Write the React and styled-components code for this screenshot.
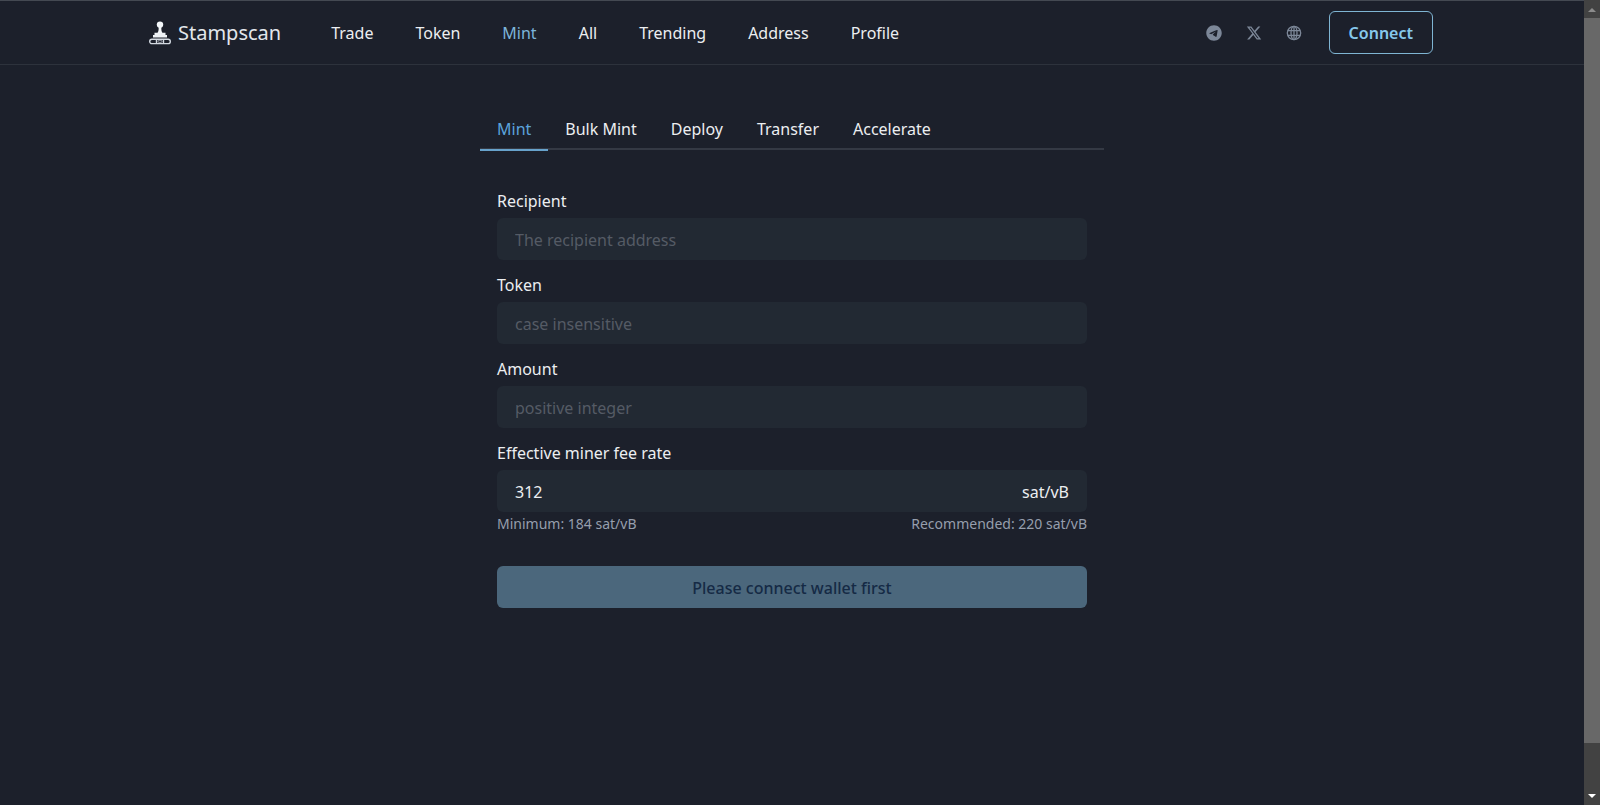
import { useState } from "react";
import styled, { createGlobalStyle } from "styled-components";
import { FaTelegram, FaXTwitter } from "react-icons/fa6";

const navLinks = ["Trade", "Token", "Mint", "All", "Trending", "Address", "Profile"];
const tabs = ["Mint", "Bulk Mint", "Deploy", "Transfer", "Accelerate"];

const StampLogo = () => (
    <svg width="22" height="24" viewBox="0 0 22 24" fill="none">
        <circle cx="11" cy="3.6" r="3.2" fill="#f4f7fa" />
        <path d="M9.5 6h3c-.4 2.400-.1 4.400 1.100 6.200H8.400c1.200-1.800 1.500-3.800 1.100-6.200z" fill="#f4f7fa" />
        <path d="M5.500 11.800h11v2.200H18v2.500H4V14h1.500z" fill="#eef2f6" />
        <rect x="0.700" y="18.200" width="20.600" height="4.400" rx="2.200" stroke="#d3d9e1" strokeWidth="1.400" />
        <path d="M7.500 18.200v4.400M14.500 18.200v4.400" stroke="#d3d9e1" strokeWidth="1.400" />
        <rect x="9" y="19.400" width="4" height="2" rx="1" stroke="#d3d9e1" strokeWidth="0.600" />
    </svg>
);

const GlobeIcon = () => (
    <svg width="16" height="16" viewBox="0 0 16 16" fill="none" stroke="currentColor" strokeWidth="1.300">
        <circle cx="8" cy="8" r="6.700" />
        <ellipse cx="8" cy="8" rx="3" ry="6.700" />
        <path d="M8 1.300v13.400M1.800 5.600h12.400M1.800 10.400h12.400" />
    </svg>
);

const App = () => {
    const [tab, setTab] = useState("Mint");
    const [fee, setFee] = useState("312");

    return (
        <>
            <GlobalStyle />
            <Window>
                <Page>
                    <Header>
                        <HeaderInner>
                            <Brand href='#'>
                                <StampLogo />
                                <span>Stampscan</span>
                            </Brand>
                            <Nav>
                                {navLinks.map((name) => (
                                    <NavLink key={name} href='#' $active={name === "Mint"}>
                                        {name}
                                    </NavLink>
                                ))}
                            </Nav>
                            <Socials>
                                <a href='#' aria-label='Telegram'><FaTelegram size={16} /></a>
                                <a href='#' aria-label='X'><FaXTwitter size={16} /></a>
                                <a href='#' aria-label='Website'><GlobeIcon /></a>
                            </Socials>
                            <ConnectButton type='button'>Connect</ConnectButton>
                        </HeaderInner>
                    </Header>
                    <Main>
                        <TabList role='tablist'>
                            {tabs.map((name) => (
                                <Tab
                                    key={name}
                                    type='button'
                                    role='tab'
                                    aria-selected={tab === name}
                                    $active={tab === name}
                                    onClick={() => setTab(name)}
                                >
                                    {name}
                                </Tab>
                            ))}
                        </TabList>
                        <Form onSubmit={(e) => e.preventDefault()}>
                            <Field>
                                <label htmlFor='recipient'>Recipient</label>
                                <InputBox>
                                    <input id='recipient' placeholder='The recipient address' />
                                </InputBox>
                            </Field>
                            <Field>
                                <label htmlFor='token'>Token</label>
                                <InputBox>
                                    <input id='token' placeholder='case insensitive' />
                                </InputBox>
                            </Field>
                            <Field>
                                <label htmlFor='amount'>Amount</label>
                                <InputBox>
                                    <input id='amount' placeholder='positive integer' />
                                </InputBox>
                            </Field>
                            <Field>
                                <label htmlFor='fee'>Effective miner fee rate</label>
                                <InputBox>
                                    <input id='fee' value={fee} onChange={(e) => setFee(e.target.value)} />
                                    <span>sat/vB</span>
                                </InputBox>
                            </Field>
                            <Hints>
                                <span>Minimum: 184 sat/vB</span>
                                <span>Recommended: 220 sat/vB</span>
                            </Hints>
                            <SubmitButton type='submit' disabled>Please connect wallet first</SubmitButton>
                        </Form>
                    </Main>
                </Page>
                <Scrollbar aria-hidden='true'>
                    <Arrow viewBox="0 0 16 18"><path d="M4 12l4-4 4 4z" fill="#8b8b8b" /></Arrow>
                    <Thumb />
                    <Arrow viewBox="0 0 16 18"><path d="M4 7h8l-4 4z" fill="#ffffff" /></Arrow>
                </Scrollbar>
            </Window>
        </>
    );
};

const GlobalStyle = createGlobalStyle`
	* {
		box-sizing: border-box;
	}

	body {
		margin: 0;
		background: #1c202b;
		color: #eceef1;
		font-family: "Noto Sans", "Open Sans", sans-serif;
		font-size: 16px;
		line-height: 24px;
	}

	button,
	input {
		font: inherit;
	}
`;

const Window = styled.div`
	display: flex;
	align-items: flex-start;
`;

const Page = styled.div`
	flex: 1;
	min-width: 0;
`;

const Header = styled.header`
	border-top: 1px solid #444952;
	border-bottom: 1px solid #2d323c;
`;

const HeaderInner = styled.div`
	display: flex;
	align-items: center;
	max-width: 1286px;
	height: 63px;
	margin: 0 auto;
	padding-right: 2px;
`;

const Brand = styled.a`
	display: flex;
	align-items: center;
	gap: 7px;
	margin-right: 50px;
	color: #e3e7ec;
	font-size: 20px;
	text-decoration: none;
`;

const Nav = styled.nav`
	display: flex;
	gap: 42px;
`;

const NavLink = styled.a`
	color: ${({ $active }) => ($active ? "#7db4da" : "#eceef1")};
	text-decoration: none;
`;

const Socials = styled.div`
	display: flex;
	align-items: center;
	gap: 24px;
	margin: 0 27px 0 auto;

	a {
		display: flex;
		color: #7c8798;
	}
`;

const ConnectButton = styled.button`
	height: 43px;
	padding: 0 19px;
	border: 1px solid #7fb5d3;
	border-radius: 6px;
	background: transparent;
	color: #86c8ec;
	font-weight: 600;
`;

const Main = styled.main`
	max-width: 624px;
	margin: 42px auto 0;
`;

const TabList = styled.div`
	display: flex;
	border-bottom: 2px solid #343944;
`;

const Tab = styled.button`
	height: 44px;
	margin-bottom: -3px;
	padding: 2px 17px 0;
	border: 0;
	border-bottom: 2px solid ${({ $active }) => ($active ? "#67a2cb" : "transparent")};
	background: transparent;
	color: ${({ $active }) => ($active ? "#5ba3db" : "#eceef1")};
`;

const Form = styled.form`
	padding: 39px 17px;
`;

const Field = styled.div`
	margin-bottom: 13px;

	label {
		display: block;
		margin-bottom: 5px;
	}
`;

const InputBox = styled.div`
	display: flex;
	align-items: center;
	height: 42px;
	padding: 2px 18px 0;
	border-radius: 6px;
	background: #222933;

	input {
		flex: 1;
		min-width: 0;
		padding: 0;
		border: 0;
		outline: 0;
		background: transparent;
		color: #eceef1;
	}

	input::placeholder {
		color: #555b65;
		opacity: 1;
	}
`;

const Hints = styled.div`
	display: flex;
	justify-content: space-between;
	margin: -13px 0 30px;
	color: #969ead;
	font-size: 14px;
`;

const SubmitButton = styled.button`
	width: 100%;
	height: 42px;
	padding: 2px 18px 0;
	border: 0;
	border-radius: 6px;
	background: #4b677c;
	color: #152a45;
	font-weight: 500;
`;

const Scrollbar = styled.div`
	display: flex;
	flex-direction: column;
	position: sticky;
	top: 0;
	width: 16px;
	height: 100vh;
	background: #424242;
`;

const Thumb = styled.div`
	height: 90%;
	margin-bottom: auto;
	background: #686868;
`;

const Arrow = styled.svg`
	flex: none;
	width: 16px;
	height: 18px;
`;

export default App;
